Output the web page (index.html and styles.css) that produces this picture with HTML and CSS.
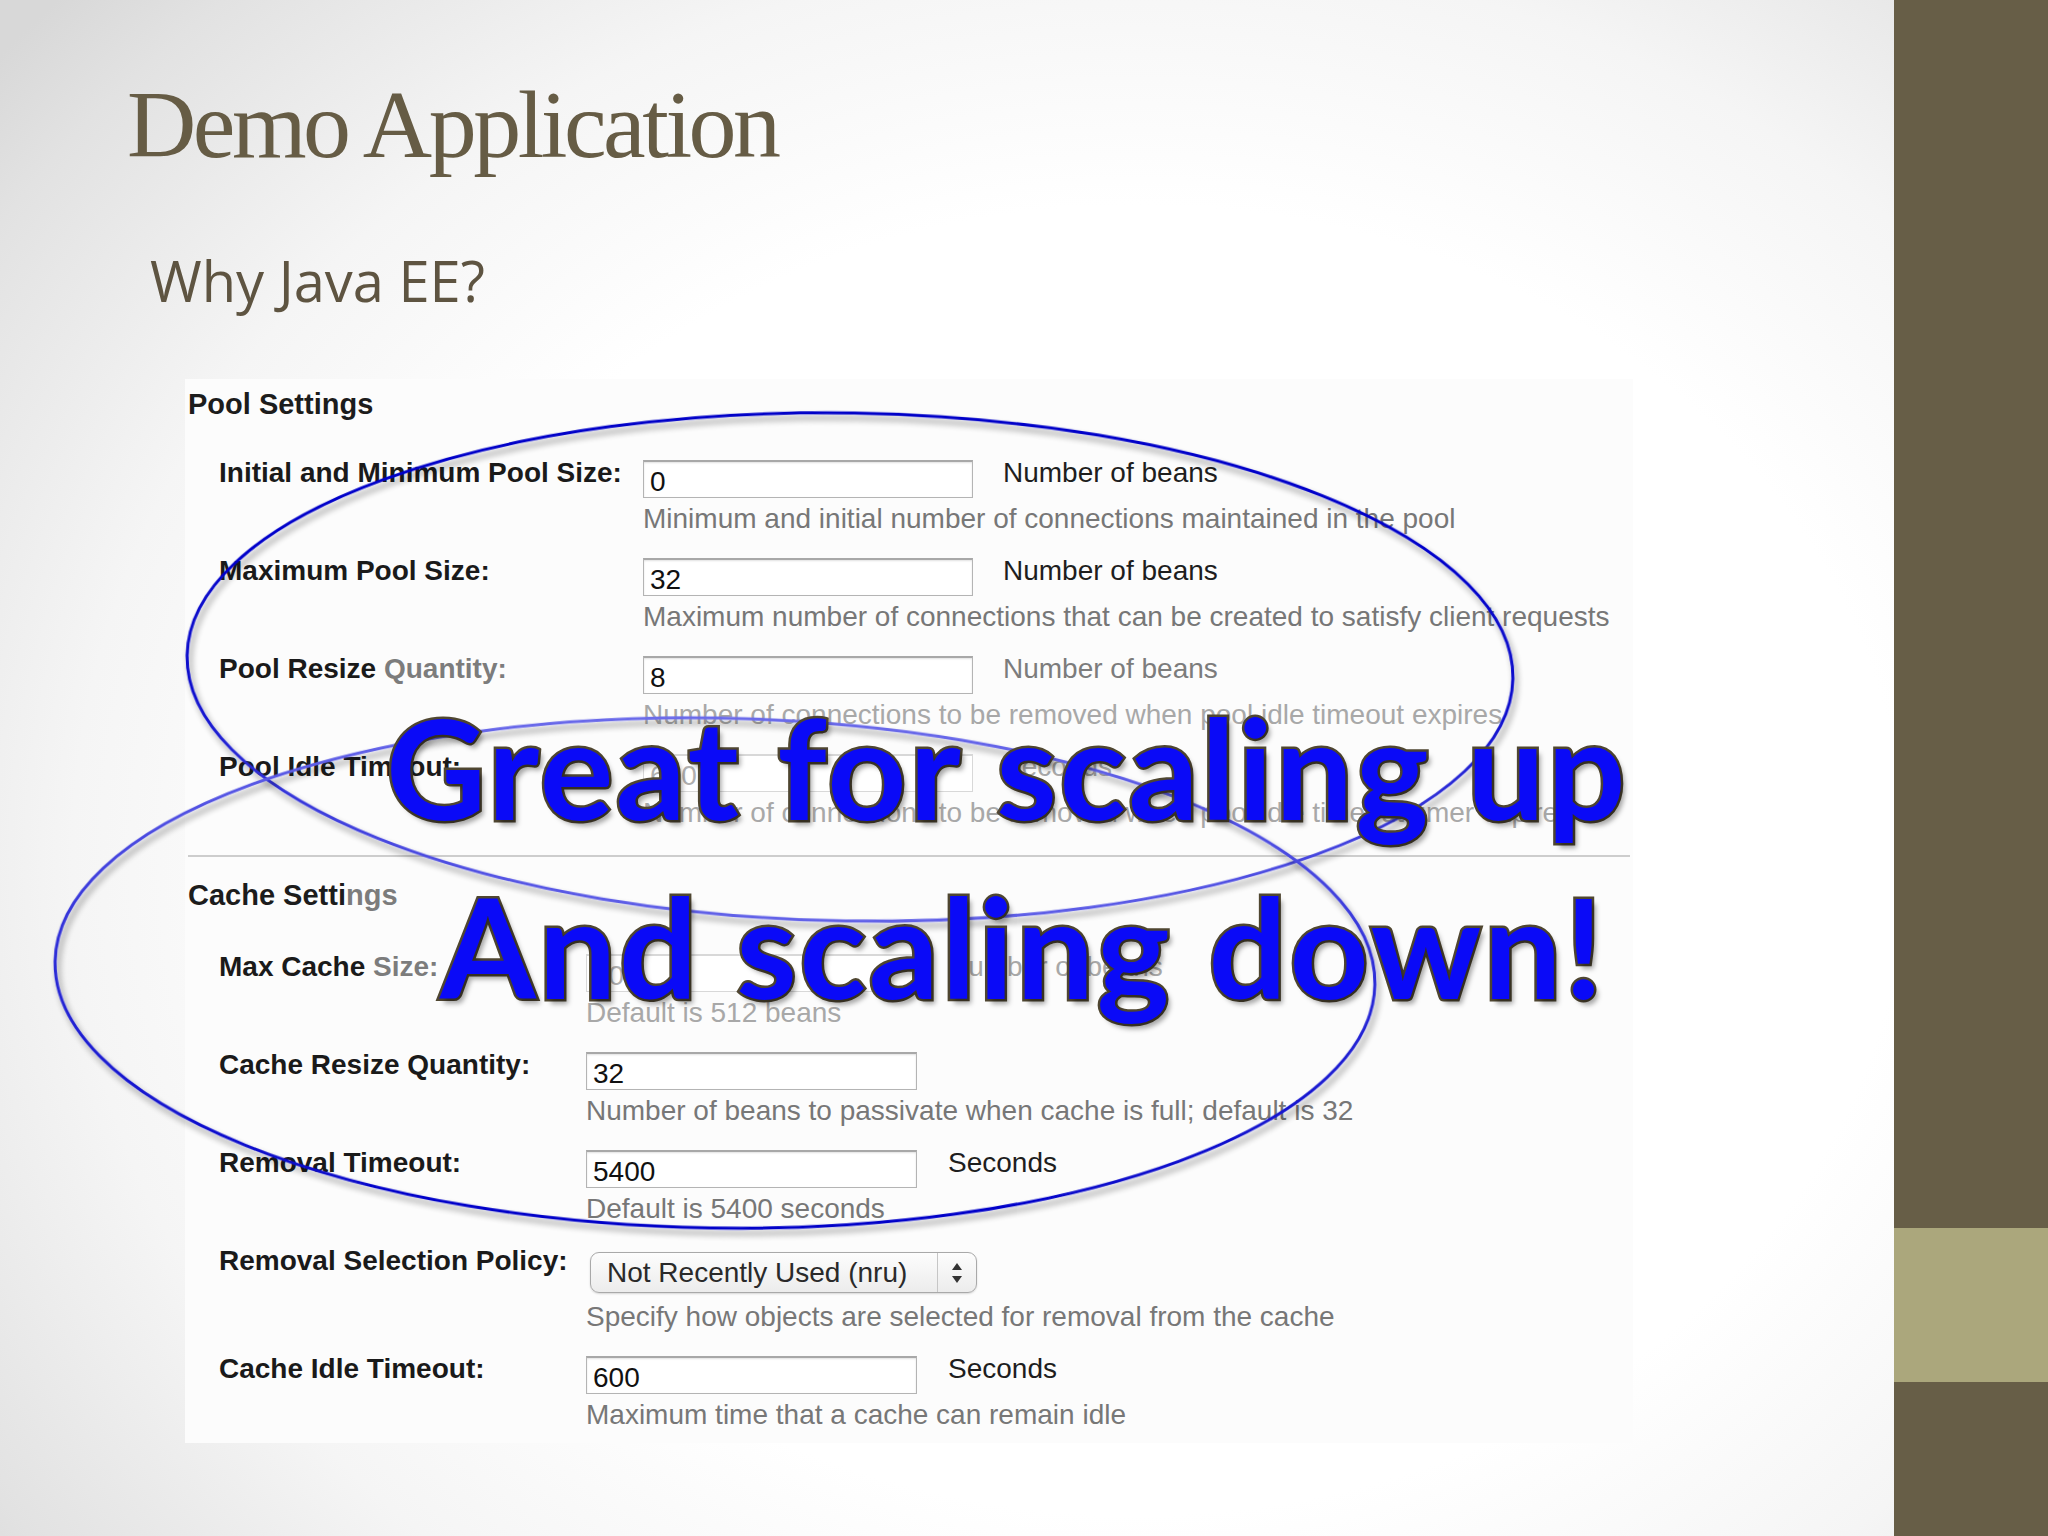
FILE: index.html
```html
<!DOCTYPE html>
<html lang="en">
<head>
<meta charset="utf-8">
<title>Demo Application</title>
<link rel="stylesheet" href="styles.css">
</head>
<body>
<div class="slide">
  <main class="main">
    <h1 class="title">Demo Application</h1>
    <p class="subtitle">Why Java EE?</p>

    <section class="panel">
      <h2 class="sec">Pool Settings</h2>
      <div class="rows pool">
        <div class="row">
          <div class="lbl">Initial and Minimum Pool Size:</div>
          <div class="inp">0</div>
          <div class="unit">Number of beans</div>
          <div class="help">Minimum and initial number of connections maintained in the pool</div>
        </div>
        <div class="row">
          <div class="lbl">Maximum Pool Size:</div>
          <div class="inp">32</div>
          <div class="unit">Number of beans</div>
          <div class="help">Maximum number of connections that can be created to satisfy client requests</div>
        </div>
        <div class="row">
          <div class="lbl">Pool Resize <span class="fade">Quantity:</span></div>
          <div class="inp">8</div>
          <div class="unit fade">Number of beans</div>
          <div class="help faint">Number of connections to be removed when pool idle timeout expires</div>
        </div>
        <div class="row">
          <div class="lbl">Pool Idle Timeout:</div>
          <div class="inp ghost">600</div>
          <div class="unit faint">Seconds</div>
          <div class="help faint">Number of connections to be removed when pool idle timeout timer expires</div>
        </div>
      </div>

      <hr class="sep">

      <h2 class="sec sec2">Cache Setti<span class="fade">ngs</span></h2>
      <div class="rows cache">
        <div class="row">
          <div class="lbl">Max Cache <span class="fade">Size:</span></div>
          <div class="inp ghost">10</div>
          <div class="unit faint">Number of beans</div>
          <div class="help faint">Default is 512 beans</div>
        </div>
        <div class="row">
          <div class="lbl">Cache Resize Quantity:</div>
          <div class="inp">32</div>
          <div class="unit"></div>
          <div class="help">Number of beans to passivate when cache is full; default is 32</div>
        </div>
        <div class="row">
          <div class="lbl">Removal Timeout:</div>
          <div class="inp">5400</div>
          <div class="unit">Seconds</div>
          <div class="help">Default is 5400 seconds</div>
        </div>
        <div class="row selrow">
          <div class="lbl">Removal Selection Policy:</div>
          <div class="select">
            <span class="seltext">Not Recently Used (nru)</span>
            <span class="arrows">
              <svg width="14" height="24" viewBox="0 0 14 24"><path d="M7 2 L12 9 H2 Z" fill="#333"/><path d="M7 22 L12 15 H2 Z" fill="#333"/></svg>
            </span>
          </div>
          <div class="help">Specify how objects are selected for removal from the cache</div>
        </div>
        <div class="row">
          <div class="lbl">Cache Idle Timeout:</div>
          <div class="inp">600</div>
          <div class="unit">Seconds</div>
          <div class="help">Maximum time that a cache can remain idle</div>
        </div>
      </div>
    </section>

    <svg class="rings" width="1894" height="1536" viewBox="0 0 1894 1536">
      <defs>
        <linearGradient id="g1" gradientUnits="userSpaceOnUse" x1="0" y1="413" x2="0" y2="921">
          <stop offset="0" stop-color="#0000c8"/>
          <stop offset="0.55" stop-color="#0a0acc"/>
          <stop offset="1" stop-color="#6262e8"/>
        </linearGradient>
        <linearGradient id="g2" gradientUnits="userSpaceOnUse" x1="0" y1="718" x2="0" y2="1228">
          <stop offset="0" stop-color="#6a6aea"/>
          <stop offset="0.45" stop-color="#3030d8"/>
          <stop offset="1" stop-color="#0000c8"/>
        </linearGradient>
        <filter id="sh" x="-10%" y="-10%" width="120%" height="130%">
          <feGaussianBlur in="SourceAlpha" stdDeviation="3"/>
          <feOffset dx="3" dy="5" result="b"/>
          <feComponentTransfer><feFuncA type="linear" slope="0.45"/></feComponentTransfer>
          <feMerge><feMergeNode/><feMergeNode in="SourceGraphic"/></feMerge>
        </filter>
      </defs>
      <ellipse cx="850" cy="667" rx="663" ry="254" transform="rotate(1 850 667)" fill="none" stroke="url(#g1)" stroke-width="3" filter="url(#sh)"/>
      <ellipse cx="715" cy="973" rx="660" ry="255" transform="rotate(1 715 973)" fill="none" stroke="url(#g2)" stroke-width="3" filter="url(#sh)"/>
    </svg>

    <div class="big big1">Great for scaling up</div>
    <div class="big big2">And scaling down!</div>
  </main>
  <aside class="side"><div class="band"></div></aside>
</div>
</body>
</html>
```

FILE: styles.css
```css
html, body {
  margin: 0;
  padding: 0;
}
body {
  width: 2048px;
  height: 1536px;
  overflow: hidden;
  font-family: "Liberation Sans", Arial, sans-serif;
}
.slide {
  display: flex;
  width: 2048px;
  height: 1536px;
}
.main {
  position: relative;
  flex: none;
  width: 1894px;
  height: 1536px;
  overflow: hidden;
  background:
    radial-gradient(ellipse 78% 82% at 60% 56%, #ffffff 52%, #f5f5f5 72%, #e2e2e2 92%, #d8d8d8 100%);
}
.side {
  flex: 1;
  background: #675e47;
  padding-top: 1228px;
  box-sizing: border-box;
}
.band {
  height: 154px;
  background: #aba77c;
}

.title {
  margin: 0;
  padding: 77px 0 0 127px;
  font-family: "Liberation Serif", "Times New Roman", serif;
  font-weight: 400;
  font-size: 96px;
  line-height: 96px;
  letter-spacing: -3.5px;
  color: #665c45;
}
.subtitle {
  margin: 79px 0 0 150px;
  font-family: "Open Sans", "Liberation Sans", sans-serif;
  font-size: 56px;
  line-height: 57px;
  color: #5e5441;
}

.panel {
  display: flow-root;
  margin: 70px 0 0 185px;
  width: 1448px;
  box-sizing: border-box;
  padding: 8px 0 0 3px;
  background: #fcfcfc;
}
.sec {
  margin: 0;
  font-size: 29px;
  line-height: 34px;
  font-weight: 700;
  color: #1c1c1c;
}
.rows {
  margin: 36px 0 0 31px;
}
.cache {
  margin-top: 39px;
}
.row {
  display: grid;
  grid-template-columns: 394px 330px auto;
  grid-template-rows: 41px auto;
  column-gap: 30px;
  margin-bottom: 20px;
  font-size: 28px;
  white-space: nowrap;
}
.cache .row {
  grid-template-columns: 336px 331px auto;
  column-gap: 31px;
}
.cache .row:last-child {
  margin-bottom: 12px;
}
.lbl {
  grid-column: 1;
  grid-row: 1;
  font-weight: 700;
  line-height: 32px;
  color: #1a1a1a;
}
.inp {
  grid-column: 2;
  grid-row: 1;
  margin-top: 3px;
  height: 38px;
  box-sizing: border-box;
  padding: 4px 0 0 6px;
  line-height: 32px;
  background: #fff;
  border: 1px solid #b4b4b4;
  border-top: 2px solid #a8a8a8;
  box-shadow: inset 0 1px 2px rgba(0, 0, 0, 0.12);
  color: #111;
}
.unit {
  grid-column: 3;
  grid-row: 1;
  line-height: 32px;
  color: #1e1e1e;
}
.help {
  grid-column: 2 / span 2;
  grid-row: 2;
  padding-top: 5px;
  line-height: 32px;
  color: #777;
}
.fade {
  color: #7c7c7c;
}
.faint {
  color: #a8a8a8;
}
.ghost {
  color: #b0b0b0;
  border-color: #d8d8d8;
  box-shadow: none;
}

.selrow {
  grid-template-rows: 48px auto;
}
.select {
  grid-column: 2 / span 2;
  grid-row: 1;
  margin: 7px 0 0 4px;
  width: 387px;
  height: 41px;
  box-sizing: border-box;
  display: flex;
  align-items: center;
  border: 1px solid #a9a9a9;
  border-radius: 9px;
  background: linear-gradient(#fdfdfd, #ececec);
  box-shadow: 0 1px 2px rgba(0, 0, 0, 0.15);
  color: #2a2a2a;
}
.seltext {
  flex: 1;
  padding-left: 16px;
  line-height: 32px;
}
.arrows {
  display: flex;
  align-items: center;
  justify-content: center;
  width: 38px;
  height: 100%;
  border-left: 1px solid #c6c6c6;
}
.selrow .help {
  padding-top: 8px;
}

.sep {
  margin: 26px 0 0 0;
  width: 1442px;
  height: 2px;
  border: none;
  background: #cdcdcd;
}
.sec2 {
  margin-top: 21px;
}

.rings {
  position: absolute;
  left: 0;
  top: 0;
  pointer-events: none;
}

.big {
  position: absolute;
  font-family: Lato, "Open Sans", sans-serif;
  font-weight: 700;
  font-size: 138px;
  line-height: 138px;
  white-space: nowrap;
  color: #0a0af7;
  -webkit-text-stroke: 5px #4f4631;
  paint-order: stroke fill;
  text-shadow: 4px 5px 5px rgba(0, 0, 0, 0.35);
}
.big1 {
  left: 386px;
  top: 698px;
  letter-spacing: 2.5px;
}
.big2 {
  left: 440px;
  top: 877px;
  letter-spacing: 2.7px;
}
```
